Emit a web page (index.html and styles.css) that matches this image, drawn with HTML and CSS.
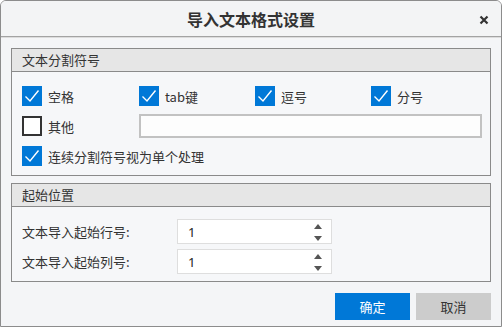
FILE: index.html
```html
<!DOCTYPE html>
<html lang="zh">
<head>
<meta charset="utf-8">
<link rel="stylesheet" href="styles.css">
</head>
<body>
<div class="dialog">
  <div class="titlebar">
    <span class="title">导入文本格式设置</span>
    <svg class="close" viewBox="0 0 10 10"><path d="M1.5 1.5 L8.5 8.5 M8.5 1.5 L1.5 8.5" /></svg>
  </div>
  <div class="content">
    <div class="group">
      <div class="group-head">文本分割符号</div>
      <div class="group-body sep-grid">
        <label class="check"><span class="box on"><svg viewBox="0 0 20 20"><path d="M3.5 10.5 L8 15 L16.5 4.5" /></svg></span>空格</label>
        <label class="check"><span class="box on"><svg viewBox="0 0 20 20"><path d="M3.5 10.5 L8 15 L16.5 4.5" /></svg></span>tab键</label>
        <label class="check"><span class="box on"><svg viewBox="0 0 20 20"><path d="M3.5 10.5 L8 15 L16.5 4.5" /></svg></span>逗号</label>
        <label class="check"><span class="box on"><svg viewBox="0 0 20 20"><path d="M3.5 10.5 L8 15 L16.5 4.5" /></svg></span>分号</label>
        <label class="check"><span class="box off"></span>其他</label>
        <div class="other-input"></div>
        <label class="check wide"><span class="box on"><svg viewBox="0 0 20 20"><path d="M3.5 10.5 L8 15 L16.5 4.5" /></svg></span>连续分割符号视为单个处理</label>
      </div>
    </div>
    <div class="group second">
      <div class="group-head">起始位置</div>
      <div class="group-body pos-grid">
        <span class="lbl">文本导入起始行号:</span>
        <div class="spin"><span class="val">1</span><span class="arrows"><span class="up"></span><span class="down"></span></span></div>
        <span class="lbl">文本导入起始列号:</span>
        <div class="spin"><span class="val">1</span><span class="arrows"><span class="up"></span><span class="down"></span></span></div>
      </div>
    </div>
    <div class="footer">
      <button class="btn primary">确定</button>
      <button class="btn">取消</button>
    </div>
  </div>
</div>
</body>
</html>
```

FILE: styles.css
```css
* { box-sizing: border-box; }
html, body { margin: 0; padding: 0; background: #ffffff; }
body {
  font-family: "Noto Sans CJK SC", "Noto Sans", sans-serif;
  font-size: 13px;
  color: #222;
}
.dialog {
  width: 502px;
  height: 327px;
  border: 1px solid #8c8c8c;
  border-radius: 6px 6px 0 0;
  background: #f4f5f7;
  display: flex;
  flex-direction: column;
  overflow: hidden;
}
.titlebar {
  height: 36px;
  flex: none;
  background: #f3f4f5;
  border-bottom: 1px solid #a3a3a3;
  box-shadow: 0 1px 0 #dcdcdc;
  display: flex;
  align-items: center;
  justify-content: center;
  position: relative;
}
.title {
  font-size: 16px;
  font-weight: bold;
  color: #333;
}
.close {
  position: absolute;
  right: 12px;
  top: 14px;
  width: 10px;
  height: 10px;
}
.close path { fill: none; stroke: #333; stroke-width: 2.2; }
.content {
  padding: 11px 10px 0 10px;
  display: flex;
  flex-direction: column;
  flex: 1;
}
.group {
  border: 1px solid #8a8a8a;
  background: #f6f7f9;
}
.group.second { margin-top: 7px; }
.group-head {
  height: 23px;
  background: #e6e6e6;
  border-bottom: 1px solid #8a8a8a;
  padding-left: 10px;
  line-height: 22px;
  color: #333;
}
.sep-grid {
  display: grid;
  grid-template-columns: 117px 116px 116px 1fr;
  grid-template-rows: 20px 24px 20px;
  row-gap: 8px;
  padding: 14px 8px 9px 10px;
  align-items: center;
}
.check {
  display: flex;
  align-items: center;
  gap: 6px;
  color: #333;
  white-space: nowrap;
}
.check.wide { grid-column: 1 / 5; }
.box {
  width: 20px;
  height: 20px;
  flex: none;
  display: block;
}
.box.on { background: #0078d7; }
.box.on svg { width: 20px; height: 20px; display: block; }
.box.on path { fill: none; stroke: #ffffff; stroke-width: 1.4; }
.box.off { border: 2px solid #333333; background: #ffffff; }
.other-input {
  grid-column: 2 / 5;
  height: 24px;
  background: #fdfdfd;
  border: 2px solid #c2c2c2;
  width: 343px;
}
.pos-grid {
  display: grid;
  grid-template-columns: 155px 155px;
  grid-auto-rows: 25px;
  row-gap: 5px;
  padding: 12px 10px 7px 10px;
  align-items: center;
}
.lbl { color: #333; }
.spin {
  height: 25px;
  background: #ffffff;
  border: 1px solid #dedede;
  display: flex;
  align-items: center;
  justify-content: space-between;
  padding: 0 9px 0 10px;
}
.val { font-family: "Noto Sans", sans-serif; font-size: 13px; color: #222; }
.arrows { display: flex; flex-direction: column; gap: 7px; padding-top: 1px; }
.up, .down {
  width: 0; height: 0;
  border-left: 4.5px solid transparent;
  border-right: 4.5px solid transparent;
}
.up { border-bottom: 5px solid #555; }
.down { border-top: 5px solid #555; }
.footer {
  display: flex;
  justify-content: flex-end;
  gap: 6px;
  margin-top: 11px;
}
.btn {
  width: 75px;
  height: 27px;
  border: none;
  background: #cccccc;
  color: #333;
  font-family: "Noto Sans CJK SC", sans-serif;
  font-size: 13px;
  padding: 0;
}
.btn.primary { background: #0078d7; color: #ffffff; }
```
